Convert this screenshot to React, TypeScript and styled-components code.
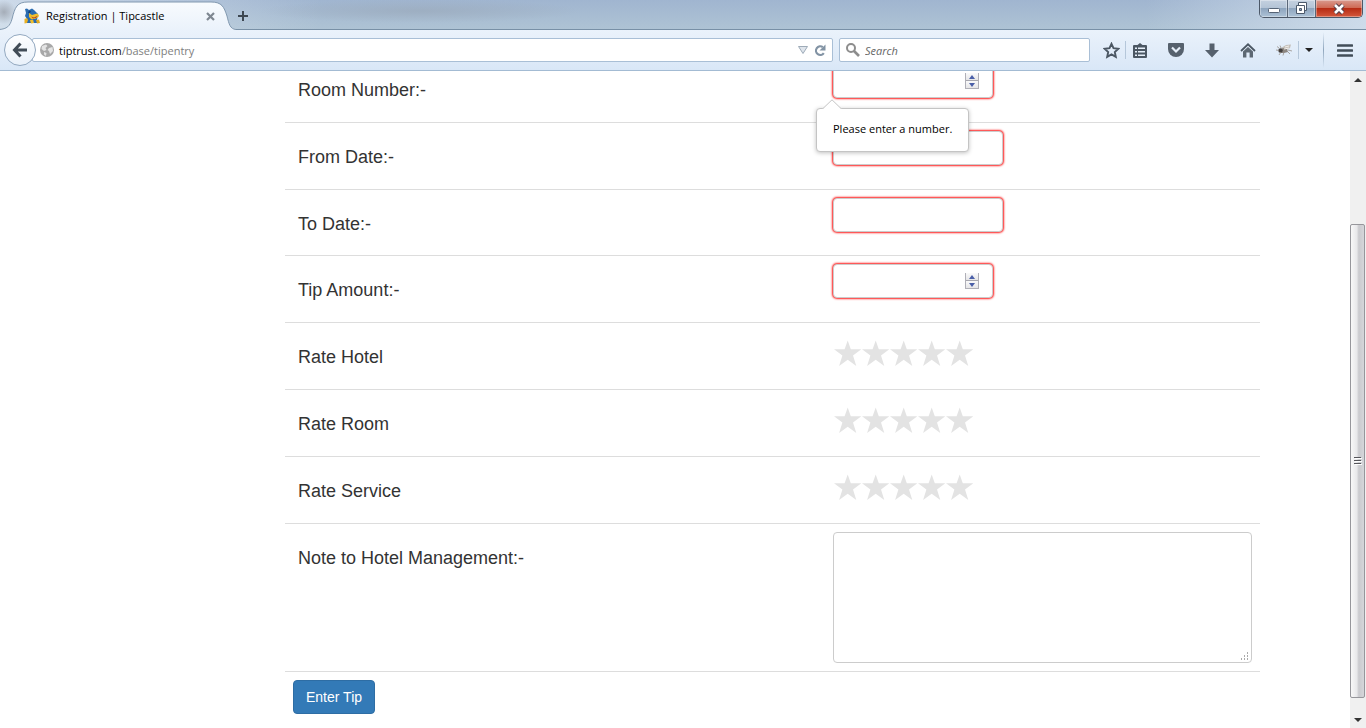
import React from "react";
import styled, { createGlobalStyle } from "styled-components";

const Global = createGlobalStyle`
  *, *::before, *::after { box-sizing: border-box; }
  body { margin: 0; background: #fff; color: #333; font-family: "Liberation Sans", Arial, sans-serif; font-size: 14px; }
  button, input, textarea { font: inherit; color: inherit; }
`;

const uiFont = `"Open Sans", "Noto Sans", sans-serif`;

const Window = styled.div`
  display: flex;
  flex-direction: column;
  height: 100vh;
  overflow: hidden;
`;

/* ---------- title bar ---------- */

const TitleBar = styled.header`
  display: flex;
  height: 30px;
  flex: none;
  border-bottom: 1px solid #7890a6;
  font-family: ${uiFont};
  font-size: 11px;
  color: #000;
  background:
    radial-gradient(ellipse 12px 12px at 4px 12px, #a5adb8, transparent),
    radial-gradient(ellipse 160px 12px at 420px 11px, rgba(150, 163, 178, 0.5), transparent),
    linear-gradient(90deg, rgba(224, 234, 244, 0.7), transparent 320px),
    linear-gradient(270deg, rgba(214, 226, 240, 0.8), transparent 220px),
    linear-gradient(#a0b5d0, #aec3d4);
`;

const Tab = styled.div`
  position: relative;
  display: flex;
  align-items: center;
  width: 232px;
  height: 30px;
  padding: 2px 16px 0 24px;
`;

const TabShape = styled.svg`
  position: absolute;
  left: 0;
  top: 0;
`;

const TabTitle = styled.span`
  position: relative;
  flex: 1;
  padding-left: 6px;
  line-height: 16px;
  white-space: nowrap;
`;

const Favicon = styled.svg`
  position: relative;
  flex: none;
`;

const IconButton = styled.button<{ $w?: number }>`
  position: relative;
  display: flex;
  flex: none;
  align-items: center;
  justify-content: center;
  width: ${(p) => p.$w ?? 28}px;
  height: 28px;
  padding: 0;
  border: 0;
  background: none;
`;

const NewTabButton = styled(IconButton)`
  height: 32px;
`;

const WindowControls = styled.div`
  display: flex;
  height: 18px;
  margin-left: auto;
  margin-right: 3px;
  border: 1px solid #4c5868;
  border-top: 0;
  border-radius: 0 0 5px 5px;
  overflow: hidden;
`;

const ControlButton = styled.button<{ $close?: boolean }>`
  display: flex;
  align-items: center;
  justify-content: center;
  width: ${(p) => (p.$close ? 46 : 28)}px;
  padding: 0;
  border: 0;
  border-right: ${(p) => (p.$close ? "0" : "1px solid #5a6778")};
  box-shadow: inset 0 0 0 1px rgba(255, 255, 255, 0.35);
  background: ${(p) =>
    p.$close
      ? "linear-gradient(#d99a8e 0%, #cf6a55 45%, #b72c14 50%, #d4583c 100%)"
      : "linear-gradient(#c4d1e0 0%, #b4c4d6 45%, #8ea5be 50%, #adc2d6 100%)"};
`;

/* ---------- navigation bar ---------- */

const NavBar = styled.nav`
  display: flex;
  flex: none;
  align-items: center;
  height: 41px;
  padding: 0 7px 0 4px;
  border-bottom: 1px solid #a3bbd3;
  background: linear-gradient(#eaf2fb, #d9e7f7);
  font-family: ${uiFont};
  font-size: 11px;
`;

const BackButton = styled.button`
  position: relative;
  display: flex;
  flex: none;
  align-items: center;
  justify-content: center;
  width: 32px;
  height: 32px;
  padding: 0;
  border: 1px solid #93a9c0;
  border-radius: 50%;
  background: linear-gradient(#fdfeff, #e9f1fa);
`;

const Box = styled.div`
  display: flex;
  align-items: center;
  height: 24px;
  border: 1px solid #a9bfd6;
  border-radius: 2px;
  background: #fff;
`;

const UrlBox = styled(Box)`
  flex: 1;
  margin-left: -4px;
  padding: 0 3px 0 7px;
`;

const Address = styled.a`
  flex: 1;
  padding: 1px 0 0 5px;
  color: #808080;
  text-decoration: none;
  line-height: 16px;
`;

const Host = styled.span`
  color: #000;
`;

const SearchBox = styled(Box)`
  width: 251px;
  margin: 0 7px 0 6px;
  padding-left: 6px;
`;

const SearchInput = styled.input`
  flex: 1;
  min-width: 0;
  padding: 0 5px;
  border: 0;
  outline: 0;
  background: none;
  &::placeholder { color: #666; font-style: italic; opacity: 1; }
`;

const Tools = styled.div`
  display: flex;
  gap: 8px;
`;

const Divider = styled.span<{ $tall?: boolean }>`
  flex: none;
  width: 1px;
  height: ${(p) => (p.$tall ? 36 : 18)}px;
  margin: ${(p) => (p.$tall ? "0 7px 0 4px" : "0")};
  background: ${(p) => (p.$tall ? "linear-gradient(transparent, #8fa6bd, transparent)" : "#b5c7da")};
`;

/* ---------- page ---------- */

const Viewport = styled.div`
  display: flex;
  flex: 1;
  min-height: 0;
`;

const Page = styled.main`
  flex: 1;
  min-width: 0;
  overflow: hidden;
`;

const Container = styled.div`
  max-width: 1170px;
  margin: 0 auto;
  padding-left: 195px;
`;

const Form = styled.form`
  margin-top: -16px;
`;

const Row = styled.div`
  display: grid;
  grid-template-columns: 540fr 435fr;
  border-top: 1px solid #ddd;
`;

const labelText = `
  display: block;
  padding: 25px 8px 21px 13px;
  font-size: 18px;
  line-height: 1.1;
`;

const Label = styled.label`
  ${labelText}
`;

const GroupLabel = styled.span`
  ${labelText}
`;

const Cell = styled.div`
  height: 0;
  min-height: 100%;
  padding: 8px;
`;

const Field = styled.div<{ $w: number }>`
  position: relative;
  display: flex;
  align-items: center;
  width: ${(p) => p.$w}px;
  height: 34px;
  border: 1px solid #ccc;
  border-radius: 4px;
  background: #fff;
  box-shadow: 0 0 2px 1px #ff1f1f;
`;

const FieldInput = styled.input`
  flex: 1;
  min-width: 0;
  height: 32px;
  padding: 6px 12px;
  border: 0;
  outline: 0;
  background: none;
  appearance: textfield;
  &::-webkit-inner-spin-button { display: none; }
`;

const Stepper = styled.span`
  display: flex;
  flex-direction: column;
  width: 14px;
  height: 16px;
  margin-right: 13px;
  border: 1px solid #b0b0b8;
  border-top: 0;
`;

const StepButton = styled.button`
  display: flex;
  flex: 1;
  align-items: center;
  justify-content: center;
  padding: 0;
  border: 0;
  background: linear-gradient(#fafafa, #e6e6e8);
  & + & { border-top: 1px solid #a8a8b0; }
`;

const Tooltip = styled.div`
  position: absolute;
  z-index: 2;
  left: -18px;
  top: 43px;
  padding: 12px 16px 14px;
  border: 1px solid #c4c4c4;
  border-radius: 4px;
  background: #fff;
  box-shadow: 0 1px 4px rgba(0, 0, 0, 0.25);
  color: #000;
  font-family: ${uiFont};
  font-size: 11px;
  line-height: 16px;
  white-space: nowrap;
`;

const TooltipArrow = styled.svg`
  position: absolute;
  left: 5px;
  top: -10px;
`;

const Stars = styled.div`
  display: flex;
  padding-top: 8px;
`;

const StarLabel = styled.label`
  display: block;
  position: relative;
  width: 28px;
  height: 28px;
`;

const StarInput = styled.input`
  position: absolute;
  inset: 0;
  margin: 0;
  opacity: 0;
`;

const NoteCell = styled.div`
  padding: 8px;
`;

const Note = styled.textarea`
  display: block;
  width: 100%;
  height: 131px;
  padding: 6px 12px;
  border: 1px solid #ccc;
  border-radius: 4px;
  outline: 0;
  resize: none;
`;

const NoteWrap = styled.div`
  position: relative;
`;

const Grip = styled.svg`
  position: absolute;
  right: 3px;
  bottom: 2px;
`;

const Actions = styled.div`
  padding: 8px;
  border-top: 1px solid #ddd;
`;

const SubmitButton = styled.button`
  display: block;
  padding: 6px 12px;
  border: 1px solid #2e6da4;
  border-radius: 4px;
  background: #337ab7;
  color: #fff;
  font-size: 14px;
  line-height: 20px;
`;

/* ---------- scroll bar ---------- */

const ScrollBar = styled.div`
  display: flex;
  flex-direction: column;
  flex: none;
  width: 16px;
  padding-right: 1px;
  background: #f0f0f0;
`;

const ScrollArrow = styled.button`
  display: flex;
  flex: none;
  align-items: center;
  justify-content: center;
  height: 17px;
  padding: 0;
  border: 0;
  background: none;
`;

const Track = styled.div`
  display: flex;
  flex: 1;
  flex-direction: column;
  &::before { content: ""; flex: 136; }
  &::after { content: ""; flex: 13; }
`;

const Thumb = styled.div`
  display: flex;
  flex: 474;
  align-items: center;
  justify-content: center;
  border: 1px solid #96969b;
  border-radius: 2px;
  background: linear-gradient(90deg, #f8f8f8, #e8e8ea 45%, #cacace 60%, #d6d6da);
`;

const starPath = "M14 1.5 L17.1 10.2 L27.7 10.2 L19.3 16.6 L22.6 27 L14 20.8 L5.4 27 L8.7 16.6 L0.3 10.2 L10.9 10.2 Z";

function NumberField({ id, children }: { id: string; children?: React.ReactNode }) {
  return (
    <Field $w={160}>
      <FieldInput id={id} type="number" />
      <Stepper>
        <StepButton type="button" aria-label="Increase">
          <svg width="8" height="4"><path d="M4 0 7 4H1Z" fill="#4a5fa8" /></svg>
        </StepButton>
        <StepButton type="button" aria-label="Decrease">
          <svg width="8" height="4"><path d="M4 4 7 0H1Z" fill="#4a5fa8" /></svg>
        </StepButton>
      </Stepper>
      {children}
    </Field>
  );
}

function Rating({ name, label }: { name: string; label: string }) {
  return (
    <Row role="radiogroup" aria-labelledby={name}>
      <GroupLabel id={name}>{label}</GroupLabel>
      <Cell>
        <Stars>
          {[1, 2, 3, 4, 5].map((n) => (
            <StarLabel key={n}>
              <StarInput type="radio" name={name} value={n} aria-label={`${n} stars`} />
              <svg width="28" height="28" viewBox="-0.7 0 28 28"><path d={starPath} fill="#e3e3e3" /></svg>
            </StarLabel>
          ))}
        </Stars>
      </Cell>
    </Row>
  );
}

function Tabs() {
  return (
    <TitleBar>
      <Tab>
        <TabShape width="236" height="30">
          <defs>
            <linearGradient id="tabFill" x1="0" y1="0" x2="0" y2="1">
              <stop offset="0" stopColor="#f8fbfe" />
              <stop offset="1" stopColor="#eaf2fb" />
            </linearGradient>
          </defs>
          <path
            d="M-1 29.5 C7 29 10 26 12 19 C15 7 17 2 28 2 H211 C222 2 224 7 227 16 C229 24 230 29 236 29.5 V31 H-1Z"
            fill="url(#tabFill)"
          />
          <path
            d="M-1 29.5 C7 29 10 26 12 19 C15 7 17 2 28 2 H211 C222 2 224 7 227 16 C229 24 230 29 236 29.5"
            fill="none"
            stroke="#8299b0"
          />
        </TabShape>
        <Favicon width="16" height="16" viewBox="0 0 16 16">
          <path d="M1 1 3 0.5 5 2 8 0.5 10 2 12 4 14 6 13 12 14 15H2L3 11 1 8 2 5Z" fill="#2a6cb0" />
          <path d="M5 5 8 7 13 5.5 15 7 14.5 9 11 11 7 11 5 9Z" fill="#f0c02c" />
          <path d="M7 8.5 10 9.5 14 7.5 12 10 9 10.5Z" fill="#b5442a" />
          <path d="M0.5 11 3 10 4 12 3 15 0.5 15.5Z" fill="#e9b022" />
          <path d="M6 12 9 11.5 10 15 7 15.5Z" fill="#f0bd2c" />
          <path d="M12 12 15 11.5 16 15 13 15.5Z" fill="#e2aa20" />
          <path d="M5 2.5 7 3 6 5 4 5Z" fill="#16427c" />
        </Favicon>
        <TabTitle>Registration | Tipcastle</TabTitle>
        <IconButton $w={12} aria-label="Close tab">
          <svg width="9" height="9"><path d="M1 1 8 8M8 1 1 8" stroke="#7e8791" strokeWidth="2.2" /></svg>
        </IconButton>
      </Tab>
      <NewTabButton $w={22} aria-label="New tab">
        <svg width="12" height="12"><path d="M6 1V11M1 6H11" stroke="#3d4751" strokeWidth="2" /></svg>
      </NewTabButton>
      <WindowControls>
        <ControlButton aria-label="Minimize">
          <svg width="14" height="8"><rect x="1.5" y="3.5" width="11" height="4" rx="1" fill="#fff" stroke="#566476" /></svg>
        </ControlButton>
        <ControlButton aria-label="Restore">
          <svg width="13" height="13">
            <path d="M3.5 .5H11.5V8.5H3.5Z" fill="#fff" stroke="#4c596b" />
            <path d="M1.5 3.5H9.5V11.5H1.5Z" fill="#fff" stroke="#4c596b" />
            <path d="M4.5 6.5H6.5V8.5H4.5Z" fill="#8ea5be" stroke="#4c596b" />
          </svg>
        </ControlButton>
        <ControlButton $close aria-label="Close">
          <svg width="14" height="12">
            <path d="M3 2 11 10M11 2 3 10" stroke="#57404a" strokeWidth="4.6" />
            <path d="M3 2 11 10M11 2 3 10" stroke="#fff" strokeWidth="2.6" />
          </svg>
        </ControlButton>
      </WindowControls>
    </TitleBar>
  );
}

const ink = "#4b5763";

function Navigation() {
  return (
    <NavBar>
      <BackButton aria-label="Back">
        <svg width="16" height="16"><path d="M8.5 1.5 2.5 8 8.5 14.5M3 8H15" fill="none" stroke="#414c57" strokeWidth="3" /></svg>
      </BackButton>
      <UrlBox>
        <svg width="14" height="14">
          <circle cx="7" cy="7" r="7" fill="#a8a8a8" />
          <path d="M2 3 6 1.5 7.5 3 5.5 5 6.5 7 4 8 1.5 6ZM9 5 12.5 4 13 8 10 11 9 8 7.5 7ZM4 9 6.5 10 6 13 4 11.5Z" fill="#e4e4e4" />
        </svg>
        <Address href="#"><Host>tiptrust.com</Host>/base/tipentry</Address>
        <IconButton $w={16} aria-label="Show history">
          <svg width="10" height="8"><path d="M.5 .5H9.5L5 7.5Z" fill="#dfe5ec" stroke="#9eabb8" /></svg>
        </IconButton>
        <IconButton $w={18} aria-label="Reload">
          <svg width="12" height="13">
            <path d="M9.8 9.2A4.3 4.3 0 1 1 8.8 3.2" fill="none" stroke="#8293a4" strokeWidth="2.2" />
            <path d="M11.5 .5V6.5H5.5Z" fill="#8293a4" />
          </svg>
        </IconButton>
      </UrlBox>
      <SearchBox>
        <svg width="14" height="14">
          <circle cx="5" cy="5" r="4" fill="none" stroke="#8d8d8d" strokeWidth="2" />
          <path d="M8 8 13 13" stroke="#8d8d8d" strokeWidth="2.6" />
        </svg>
        <SearchInput type="text" placeholder="Search" aria-label="Search" />
      </SearchBox>
      <IconButton aria-label="Bookmark this page">
        <svg width="17" height="17" viewBox="0 0 17 17">
          <path d="M8.5 1.8 10.5 6.2 15.4 6.7 11.8 10 12.8 14.8 8.5 12.4 4.2 14.8 5.2 10 1.6 6.7 6.5 6.2Z" fill="none" stroke={ink} strokeWidth="1.9" />
        </svg>
      </IconButton>
      <Divider />
      <Tools>
        <IconButton aria-label="Bookmarks">
          <svg width="14" height="15">
            <path d="M1 2H4.5L7 0 9.5 2H13Q14 2 14 3V14Q14 15 13 15H1Q0 15 0 14V3Q0 2 1 2Z" fill={ink} />
            <path d="M2 4.5H4V6H2ZM5 4.5H12V6H5ZM2 8H4V9.5H2ZM5 8H12V9.5H5ZM2 11.5H4V13H2ZM5 11.5H12V13H5Z" fill="#e6eff9" />
          </svg>
        </IconButton>
        <IconButton aria-label="Save to Pocket">
          <svg width="16" height="14">
            <path d="M1 0H15Q16 0 16 1V6A8 8 0 0 1 0 6V1Q0 0 1 0Z" fill="#56616d" />
            <path d="M4 4.5 8 8.5 12 4.5" fill="none" stroke="#e6eff9" strokeWidth="2.2" />
          </svg>
        </IconButton>
        <IconButton aria-label="Downloads">
          <svg width="14" height="15"><path d="M4.5 0.5H9.5V7H14L7 14.5 0 7H4.5Z" fill="#56616d" /></svg>
        </IconButton>
        <IconButton aria-label="Home">
          <svg width="16" height="15">
            <path d="M1 8 8 1.3 15 8" fill="none" stroke={ink} strokeWidth="1.8" />
            <path d="M8 4 13 8.6V14.5H9.6V9.5H6.4V14.5H3V8.6Z" fill="#5d6873" />
          </svg>
        </IconButton>
        <IconButton aria-label="Firebug">
          <svg width="17" height="14" viewBox="0 0 17 14">
            <path d="M5 5 10 2 15 1.5 14 5 9 8Z" fill="#c4c0ba" />
            <path d="M3 7 7 5 11 6 12 9 8 10 4 10Z" fill="#8c8680" />
            <circle cx="4.5" cy="7.5" r="2.2" fill="#44413f" />
            <path d="M3 5 1 3.5M5 5 4 2.5M5 9 3 12M8 9 7 12.5M11 8 14 11M12 7 16 8M0 7 3 7.5" fill="none" stroke="#98928c" strokeWidth=".8" />
            <path d="M9 4 13 3M8 6 13 5" stroke="#f2efeb" strokeWidth="1" />
          </svg>
        </IconButton>
      </Tools>
      <Divider />
      <IconButton $w={20} aria-label="More">
        <svg width="8" height="4"><path d="M0 0H8L4 4Z" fill="#222" /></svg>
      </IconButton>
      <Divider $tall />
      <IconButton aria-label="Open menu">
        <svg width="16" height="13"><path d="M1 1.5H15M1 6.5H15M1 11.5H15" stroke="#424d58" strokeWidth="2.6" strokeLinecap="round" /></svg>
      </IconButton>
    </NavBar>
  );
}

export default function App() {
  return (
    <Window>
      <Global />
      <Tabs />
      <Navigation />
      <Viewport>
        <Page>
          <Container>
            <Form noValidate>
              <Row>
                <Label htmlFor="room">Room Number:-</Label>
                <Cell>
                  <NumberField id="room">
                    <Tooltip role="alert">
                      <TooltipArrow width="20" height="11">
                        <path d="M0 10.5 10 .8 20 10.5V11H0Z" fill="#fff" />
                        <path d="M1 9.5 10 .8 19 9.5" fill="none" stroke="#c4c4c4" />
                      </TooltipArrow>
                      Please enter a number.
                    </Tooltip>
                  </NumberField>
                </Cell>
              </Row>
              <Row>
                <Label htmlFor="from">From Date:-</Label>
                <Cell><Field $w={170}><FieldInput id="from" type="text" /></Field></Cell>
              </Row>
              <Row>
                <Label htmlFor="to">To Date:-</Label>
                <Cell><Field $w={170}><FieldInput id="to" type="text" /></Field></Cell>
              </Row>
              <Row>
                <Label htmlFor="amount">Tip Amount:-</Label>
                <Cell><NumberField id="amount" /></Cell>
              </Row>
              <Rating name="hotel" label="Rate Hotel" />
              <Rating name="roomRate" label="Rate Room" />
              <Rating name="service" label="Rate Service" />
              <Row>
                <Label htmlFor="note">Note to Hotel Management:-</Label>
                <NoteCell>
                  <NoteWrap>
                    <Note id="note" />
                    <Grip width="9" height="9">
                      <path d="M7 1h1M4 4h1M7 4h1M1 7h1M4 7h1M7 7h1" stroke="#aaa" strokeWidth="2" />
                    </Grip>
                  </NoteWrap>
                </NoteCell>
              </Row>
              <Actions>
                <SubmitButton type="submit">Enter Tip</SubmitButton>
              </Actions>
            </Form>
          </Container>
        </Page>
        <ScrollBar>
          <ScrollArrow aria-label="Scroll up"><svg width="8" height="4"><path d="M0 4H8L4 0Z" fill="#333" /></svg></ScrollArrow>
          <Track>
            <Thumb>
              <svg width="8" height="9"><path d="M0 1.5H7M0 4.5H7M0 7.5H7" stroke="#55555a" /><path d="M1 2.5H8M1 5.5H8M1 8.5H8" stroke="#fff" /></svg>
            </Thumb>
          </Track>
          <ScrollArrow aria-label="Scroll down"><svg width="8" height="4"><path d="M0 0H8L4 4Z" fill="#333" /></svg></ScrollArrow>
        </ScrollBar>
      </Viewport>
    </Window>
  );
}
